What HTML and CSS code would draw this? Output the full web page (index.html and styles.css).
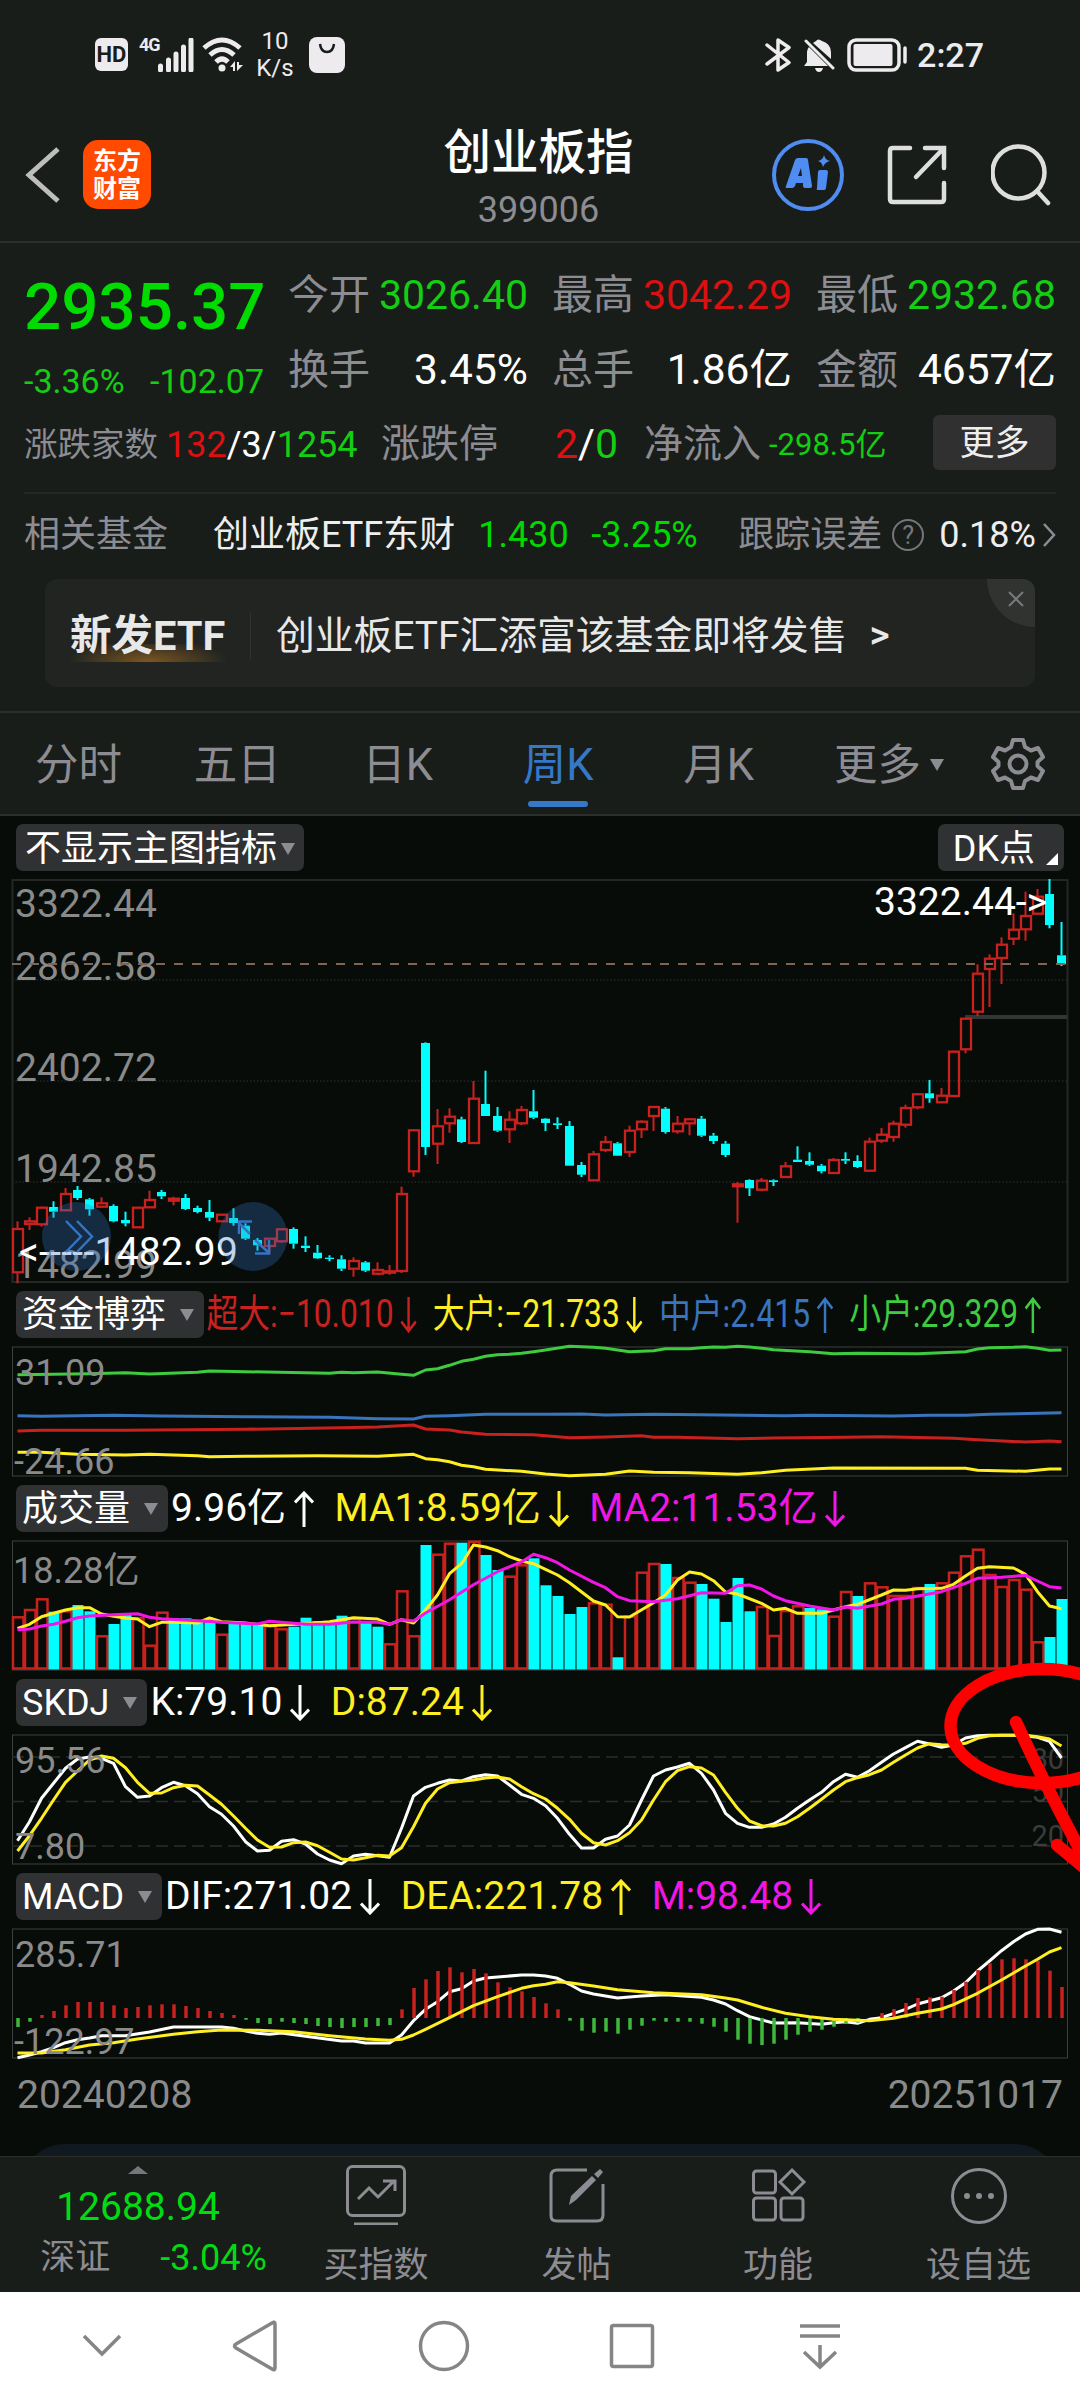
FILE: index.html
```html
<!DOCTYPE html>
<html lang="zh-CN">

<head>
    <meta charset="UTF-8">
    <meta name="viewport" content="width=device-width, initial-scale=1.0">
    <title>创业板指 399006</title>
    <link rel="stylesheet" href="styles.css">
</head>

<body>
    <svg class="defs" width="0" height="0">
        <symbol id="down" viewBox="0 0 20 36"><path d="M10 0V34M1 24.500L10 34L19 24.500" /></symbol>
        <symbol id="up" viewBox="0 0 20 36"><path d="M10 36V2M1 11.500L10 2L19 11.500" /></symbol>
    </svg>

    <div class="top">
        <!-- 状态栏 -->
        <div class="status">
            <span class="hd">HD</span>
            <span class="net">4G</span>
            <svg class="signal" width="36" height="34" viewBox="0 0 36 34">
                <path d="M2.500 28V32M10.500 22V32M18 16V32M25.500 9V32M33 2V32" />
            </svg>
            <svg class="wifi" width="42" height="36" viewBox="0 0 42 36">
                <path d="M2 11Q20 -5 38 11M8 18Q20 7 32 18M14 25Q20 19 26 25" />
                <circle cx="20" cy="31" r="3.500" />
                <path class="fill" d="M28 30L33 24V34H31V30ZM35 25V34L41 28H37V25Z" />
            </svg>
            <span class="speed">10<br>K/s</span>
            <svg class="bag" width="36" height="36" viewBox="0 0 36 36">
                <rect width="36" height="36" rx="8" />
                <path d="M11 7Q12 15 18 15Q24 15 25 7" />
            </svg>
            <svg class="bt" width="26" height="36" viewBox="0 0 26 36">
                <path d="M2 8L24 25.500L13 33V3L24 10.500L2 27" />
            </svg>
            <svg class="bell" width="32" height="36" viewBox="0 0 32 36">
                <path class="fill" d="M1 29L4 25V15Q4 12 6 10L25 29ZM10 6L13 4Q15 1 19 4Q28 7 28 15V22ZM12 31H20Q19 35 16 35Q13 35 12 31Z" />
                <path d="M3 4L30 31" />
            </svg>
            <svg class="battery" width="60" height="34" viewBox="0 0 60 34">
                <rect x="2" y="2" width="50" height="30" rx="7" />
                <rect class="fill" x="6.500" y="6" width="39" height="22" rx="2" />
                <path d="M58 10V24" />
            </svg>
            <span class="clock">2:27</span>
        </div>

        <!-- 标题 -->
        <div class="header">
            <div class="head-left">
                <svg width="36" height="58" viewBox="0 0 36 58"><path class="back" d="M33 3L4 29L33 55" /></svg>
                <span class="logo">东方<br>财富</span>
            </div>
            <div class="title">
                <h1>创业板指</h1>
                <p>399006</p>
            </div>
            <div class="head-right">
                <svg class="ai" width="74" height="74" viewBox="0 0 74 74">
                    <circle cx="37" cy="37" r="34" />
                    <path class="solid" d="M15 48L24 22Q25 20 27 20H35Q37 20 37 22L41 48Q41 50 39 50H34Q32 50 32 48V45H25L24 48Q23 50 21 50H16Q14 50 15 48ZM27 38H31L30 30Z" />
                    <path class="solid" d="M49 32H55Q57 32 57 34L55 50Q55 52 53 52H47Q45 52 46 50L47 34Q47 32 49 32Z" />
                    <path class="solid" d="M53 17Q54 22 59 23Q54 24 52 29Q51 24 47 23Q52 22 53 17Z" />
                </svg>
                <svg class="share" width="60" height="60" viewBox="0 0 60 60">
                    <path d="M23 3H6Q3 3 3 6V54Q3 57 6 57H54Q57 57 57 54V38M38 3H57V23M56 4L29 32" />
                </svg>
                <svg class="share" width="60" height="62" viewBox="0 0 60 62">
                    <circle cx="27.500" cy="28.500" r="26" />
                    <path d="M46 47L57 59" />
                </svg>
            </div>
        </div>

        <!-- 行情 -->
        <div class="quote">
            <div class="price">
                <b>2935.37</b>
                <div class="change"><span>-3.36%</span><span>-102.07</span></div>
            </div>
            <div class="stats">
                <div><label>今开</label><span class="dn">3026.40</span></div>
                <div><label>最高</label><span class="rise">3042.29</span></div>
                <div><label>最低</label><span class="dn">2932.68</span></div>
                <div><label>换手</label><span class="total">3.45%</span></div>
                <div><label>总手</label><span class="total">1.86亿</span></div>
                <div><label>金额</label><span class="total">4657亿</span></div>
            </div>
        </div>
        <div class="breadth">
            <label class="small">涨跌家数</label>
            <span class="count"><i class="rise">132</i>/3/<i class="dn">1254</i></span>
            <label>涨跌停</label>
            <span class="limit"><i class="rise">2</i>/<i class="dn">0</i></span>
            <label>净流入</label>
            <span class="inflow dn">-298.5亿</span>
            <button class="more">更多</button>
        </div>

        <!-- 相关基金 -->
        <div class="fund">
            <label>相关基金</label>
            <span class="fund-name">创业板ETF东财</span>
            <span class="dn fund-price">1.430</span>
            <span class="dn fund-rate">-3.25%</span>
            <label>跟踪误差</label>
            <span class="help">?</span>
            <span>0.18%</span>
            <svg class="go" width="14" height="26" viewBox="0 0 14 26"><path d="M2 2L12 13L2 24" /></svg>
        </div>
        <div class="banner">
            <b>新发ETF</b>
            <span class="banner-text">创业板ETF汇添富该基金即将发售</span>
            <span class="banner-go">&gt;</span>
            <span class="close"><svg width="16" height="16" viewBox="0 0 16 16"><path d="M1 1L15 15M15 1L1 15" /></svg></span>
        </div>

        <div class="tabs">
            <span>分时</span>
            <span>五日</span>
            <span>日K</span>
            <span class="active">周K</span>
            <span>月K</span>
            <span class="tab-more">更多<i class="caret"></i></span>
            <svg width="54" height="54" viewBox="0 0 54 54">
                <path d="M22 3H32L34 10L40 13.500L47 11L52 20L46.500 25V29L52 34L47 43L40 40.500L34 44L32 51H22L20 44L14 40.500L7 43L2 34L7.500 29V25L2 20L7 11L14 13.500L20 10Z" />
                <circle cx="27" cy="27" r="8.500" />
            </svg>
        </div>
    </div>

    <!-- 图表 -->
    <div class="charts">
        <div class="toolbar">
            <span class="chip">不显示主图指标<i class="caret"></i></span>
            <span class="chip dk">DK点<i class="corner"></i></span>
        </div>
        <svg class="pane" id="kline" width="1080" height="404"></svg>

        <div class="legend">
            <span class="chip">资金博弈<i class="caret"></i></span>
            <div class="values narrow">
                <span class="red">超大:−10.010<svg><use href="#down" /></svg></span>
                <span class="yellow">大户:−21.733<svg><use href="#down" /></svg></span>
                <span class="blue">中户:2.415<svg><use href="#up" /></svg></span>
                <span class="green">小户:29.329<svg><use href="#up" /></svg></span>
            </div>
        </div>
        <svg class="pane" id="flow" width="1080" height="131"></svg>

        <div class="legend">
            <span class="chip">成交量<i class="caret"></i></span>
            <div class="values">
                <span>9.96亿<svg><use href="#up" /></svg></span>
                <span class="yellow">MA1:8.59亿<svg><use href="#down" /></svg></span>
                <span class="magenta">MA2:11.53亿<svg><use href="#down" /></svg></span>
            </div>
        </div>
        <svg class="pane" id="volume" width="1080" height="131"></svg>

        <div class="legend">
            <span class="chip">SKDJ<i class="caret"></i></span>
            <div class="values">
                <span>K:79.10<svg><use href="#down" /></svg></span>
                <span class="yellow">D:87.24<svg><use href="#down" /></svg></span>
            </div>
        </div>
        <svg class="pane" id="skdj" width="1080" height="131"></svg>

        <div class="legend">
            <span class="chip">MACD<i class="caret"></i></span>
            <div class="values">
                <span>DIF:271.02<svg><use href="#down" /></svg></span>
                <span class="yellow">DEA:221.78<svg><use href="#up" /></svg></span>
                <span class="magenta">M:98.48<svg><use href="#down" /></svg></span>
            </div>
        </div>
        <svg class="pane" id="macd" width="1080" height="131"></svg>

        <div class="dates"><span>20240208</span><span>20251017</span></div>
        <div class="sheet"><div class="sheet-card"></div></div>

        <!-- 手绘标记 -->
        <svg class="mark" width="140" height="230" viewBox="940 1660 140 230">
            <ellipse cx="1042" cy="1726" rx="91.500" ry="57" />
            <path d="M1016 1722Q1050 1796 1092 1872M1057 1845L1092 1874" />
        </svg>
    </div>

    <!-- 底部工具栏 -->
    <div class="bottom">
        <div class="index">
            <i class="caret-up"></i>
            <b>12688.94</b>
            <div><label>深证</label><span>-3.04%</span></div>
        </div>
        <div class="item">
            <svg width="60" height="62" viewBox="0 0 60 62">
                <rect x="1.500" y="3.500" width="57" height="49" rx="5" />
                <path d="M8 61H52M12 36L23 25L32 34L48 18M37 18H49V28" />
            </svg>
            <span>买指数</span>
        </div>
        <div class="item">
            <svg width="60" height="62" viewBox="0 0 60 62">
                <path d="M40 7H10Q4 7 4 13V53Q4 58 10 58H50Q56 58 56 52V21" />
                <path class="fill" d="M22 42L24 33L45 13L49 17L29 37ZM47 11L53 6L56 9L51 15Z" />
            </svg>
            <span>发帖</span>
        </div>
        <div class="item">
            <svg width="60" height="62" viewBox="0 0 60 62">
                <rect x="5.500" y="8" width="22" height="22" rx="3" />
                <rect x="5.500" y="35" width="22" height="22" rx="3" />
                <rect x="33" y="35" width="22" height="22" rx="3" />
                <path d="M44 7L56 19L44 31L32 19Z" />
            </svg>
            <span>功能</span>
        </div>
        <div class="item">
            <svg width="60" height="62" viewBox="0 0 60 62">
                <circle cx="30" cy="33" r="26.500" />
                <path class="fill" d="M15 33a3 3 0 1 0 6 0a3 3 0 1 0 -6 0M27 33a3 3 0 1 0 6 0a3 3 0 1 0 -6 0M39 33a3 3 0 1 0 6 0a3 3 0 1 0 -6 0" />
            </svg>
            <span>设自选</span>
        </div>
    </div>

    <!-- 系统导航 -->
    <div class="nav">
        <svg class="hide" width="60" height="60" viewBox="0 0 60 60"><path d="M12 20L30 38L48 20" /></svg>
        <svg width="60" height="60" viewBox="0 0 60 60"><path d="M49 8V52Q49 55 46 53L10 32Q7 30 10 28L46 7Q49 5 49 8Z" /></svg>
        <svg width="60" height="60" viewBox="0 0 60 60"><circle cx="30" cy="30" r="23.500" /></svg>
        <svg width="60" height="60" viewBox="0 0 60 60"><rect x="9.500" y="9.500" width="41" height="41" rx="2" /></svg>
        <svg width="60" height="60" viewBox="0 0 60 60"><path d="M10 10H50M10 20H50M30 29V51M14 36L30 51L46 36" /></svg>
    </div>

    <script src="chart.js"></script>
</body>

</html>
```

FILE: styles.css
```css
* {
    margin: 0;
    padding: 0;
    box-sizing: border-box;
}

body {
    width: 1080px;
    height: 2400px;
    overflow: hidden;
    background-color: #191d1a;
    color: #fff;
    font-family: Roboto, "Noto Sans CJK SC", sans-serif;
    font-size: 36px;
    line-height: 1;
}

i {
    font-style: normal;
}

svg {
    display: block;
    flex: none;
    fill: none;
    stroke: #e6e6e6;
    stroke-width: 5;
}

.defs {
    position: absolute;
}

label {
    color: #8c8c92;
    white-space: nowrap;
}

.dn {
    color: #14ce14;
}

.rise {
    color: #dc1010;
}

.top {
    height: 816px;
    border-bottom: 2px solid #2b2f2c;
}

/* 状态栏 */
.status {
    display: flex;
    align-items: center;
    height: 108px;
    padding: 1px 96px 0 95px;
    color: #eeebee;
}

.status svg {
    stroke: #eeebee;
}

.hd {
    width: 33px;
    height: 33px;
    border-radius: 6px;
    background-color: #eeebee;
    color: #191d1a;
    font-size: 22px;
    font-weight: 700;
    line-height: 34px;
    text-align: center;
}

.net {
    width: 19px;
    margin: 0 0 20px 11px;
    font-size: 18px;
    font-weight: 700;
    letter-spacing: -1px;
}

.signal {
    stroke-linecap: round;
}

.wifi {
    margin-left: 8px;
}

.wifi circle,
.status .fill {
    fill: #eeebee;
    stroke: none;
}

.speed {
    width: 50px;
    margin-left: 6px;
    font-size: 24px;
    line-height: 27px;
    text-align: center;
}

.bag {
    margin-left: 9px;
}

.bag rect {
    fill: #eeebee;
    stroke: none;
}

.status .bag path {
    stroke: #191d1a;
    stroke-width: 2.5;
}

.bt {
    margin-left: auto;
    stroke-width: 3.5;
    stroke-linecap: round;
    stroke-linejoin: round;
}

.bell {
    margin-left: 12px;
    stroke-width: 3;
    stroke-linecap: round;
}

.battery {
    margin-left: 12px;
    stroke-width: 3.5;
    stroke-linecap: round;
}

.clock {
    margin-left: 10px;
    font-size: 34px;
    font-weight: 500;
}

/* 标题栏 */
.header {
    display: grid;
    grid-template-columns: 300px 1fr 311px;
    height: 135px;
    border-bottom: 2px solid #2b2f2c;
}

.head-left {
    display: flex;
    align-items: center;
    padding-left: 25px;
}

.back {
    stroke: #bdbdbd;
}

.logo {
    width: 68px;
    height: 69px;
    margin-left: 22px;
    padding-top: 7px;
    border-radius: 15px;
    background-color: #ff4a00;
    font-size: 24px;
    font-weight: 700;
    line-height: 28px;
    text-align: center;
}

.title {
    padding: 22px 0 0 8px;
    text-align: center;
}

.title h1 {
    font-size: 47.5px;
    font-weight: 500;
    line-height: 47px;
}

.title p {
    margin-top: 15px;
    color: #8c8c92;
    font-size: 36px;
}

.head-right {
    display: flex;
    align-items: center;
    gap: 41px;
    padding-left: 2px;
}

.head-right svg + svg + svg {
    margin-left: 3px;
}

.ai {
    stroke: #4f8df2;
    stroke-width: 4;
    margin-right: 1px;
}

.ai .solid {
    fill: #4f8df2;
    fill-rule: evenodd;
    stroke: none;
}

.share {
    stroke: #dedede;
    stroke-width: 4.5;
    stroke-linecap: round;
}

/* 行情 */
.quote {
    display: grid;
    grid-template-columns: 264px 768px;
    height: 164px;
    padding-left: 24px;
}

.price b {
    display: block;
    margin-top: 29px;
    color: #00dc00;
    font-size: 65.5px;
    font-weight: 500;
    line-height: 70px;
}

.change {
    display: flex;
    justify-content: space-between;
    width: 240px;
    margin-top: 22px;
    color: #14ce14;
    font-size: 34px;
}

.stats {
    display: grid;
    grid-template-columns: repeat(3, 240px);
    grid-auto-rows: 75px;
    column-gap: 24px;
    padding-top: 15px;
    font-size: 41px;
}

.stats div {
    display: flex;
    align-items: center;
    justify-content: space-between;
}

.stats .total {
    font-size: 42.5px;
}

.breadth {
    display: flex;
    align-items: center;
    height: 87px;
    margin: 0 24px;
    padding-bottom: 10px;
    border-bottom: 2px solid #242725;
    font-size: 39px;
    white-space: nowrap;
}

.breadth .small {
    width: 142px;
    font-size: 33.5px;
}

.breadth .count {
    width: 215px;
    font-size: 36px;
}

.breadth .limit {
    width: 89px;
    margin-left: 57px;
    font-size: 41px;
}

.breadth .inflow {
    margin-left: 8px;
    font-size: 31px;
}

.more {
    width: 123px;
    height: 55px;
    margin: 0 0 5px auto;
    border: 0;
    border-radius: 6px;
    background-color: #303030;
    color: #eee;
    font: 35px/57px Roboto, "Noto Sans CJK SC", sans-serif;
}

.fund {
    display: flex;
    align-items: center;
    height: 79px;
    padding: 2px 24px 0;
    color: #eee;
    white-space: nowrap;
}

.fund-name {
    margin-left: 45px;
}

.fund-price {
    width: 113px;
    margin-left: 23px;
}

.fund-rate {
    width: 147px;
}

.fund .dn {
    color: #00d900;
}

.help {
    width: 32px;
    height: 32px;
    margin: 0 15px 0 10px;
    border: 2px solid #77777b;
    border-radius: 50%;
    color: #77777b;
    font-size: 25px;
    line-height: 29px;
    text-align: center;
}

.go {
    margin-left: auto;
    stroke: #8c8c92;
    stroke-width: 2.5;
}

.banner {
    position: relative;
    display: flex;
    align-items: center;
    height: 108px;
    margin: 6px 45px 24px;
    padding: 5px 0 0 25px;
    overflow: hidden;
    border-radius: 12px;
    background-color: #212421;
    color: #e8e8e8;
    font-size: 38.8px;
    white-space: nowrap;
}

.banner b {
    width: 156px;
    padding: 6px 0;
    background: radial-gradient(ellipse 52% 130% at 50% 100%, #7d5622, transparent) no-repeat 0 100% / 100% 18px;
    font-size: 41.5px;
}

.banner-text {
    margin-left: 24px;
    padding-left: 25px;
    border-left: 1px solid #303330;
    line-height: 48px;
}

.banner-go {
    margin-left: 22px;
    font-weight: 500;
}

.close {
    position: absolute;
    top: 0;
    right: 0;
    width: 48px;
    height: 48px;
    padding: 12px 0 0 21px;
    border-bottom-left-radius: 48px;
    background-color: #313331;
}

.close svg {
    stroke: #77797a;
    stroke-width: 2;
}

/* 周期 */
.tabs {
    display: grid;
    grid-template-columns: 157px repeat(4, 160.5px) 180px 1fr;
    align-items: center;
    height: 105px;
    border-top: 2px solid #2b2f2c;
    color: #8c8c92;
    font-size: 43.5px;
    text-align: center;
}

.tabs span {
    height: 103px;
    line-height: 106px;
}

.tabs .active {
    color: #3578c8;
}

.tabs .active::after {
    content: "";
    display: block;
    width: 60px;
    height: 6px;
    margin: -18px auto 0;
    border-radius: 3px;
    background-color: #3578c8;
}

.tabs svg {
    margin: 0 0 2px 12px;
    stroke: #8c8c92;
    stroke-width: 4;
    stroke-linejoin: round;
}

.caret {
    display: inline-block;
    border: 7px solid transparent;
    border-top: 12px solid #8c8c92;
    border-bottom: 0;
}

.tab-more .caret {
    margin: 0 0 9px 9px;
}

/* 图表 */
.charts {
    position: relative;
    height: 1340px;
    background-color: #070c09;
}

.toolbar,
.legend {
    display: flex;
    align-items: center;
    height: 63px;
    padding-left: 16px;
}

.toolbar {
    justify-content: space-between;
    padding: 0 16px;
}

.chip {
    display: flex;
    align-items: center;
    height: 47px;
    padding: 1px 10px 0 6px;
    border-radius: 7px;
    background-color: #303132;
    font-size: 36px;
    white-space: nowrap;
}

.chip .caret {
    margin-left: 14px;
}

.toolbar .chip {
    padding: 2px 9px 0 9px;
}

.toolbar .caret {
    margin-left: 4px;
}

.toolbar .dk {
    padding: 2px 6px 0 15px;
}

.corner {
    align-self: flex-end;
    margin: 0 0 6px 11px;
    border: 6px solid #fff;
    border-top-color: transparent;
    border-left-color: transparent;
}

.values {
    display: flex;
    gap: 20.5px;
    padding-left: 3px;
    font-size: 39px;
    white-space: nowrap;
}

.values span {
    display: flex;
    align-items: center;
}

.values svg {
    width: 20px;
    height: 36px;
    margin-left: 8px;
    stroke: currentColor;
    stroke-width: 3;
}

.narrow {
    gap: 20px;
    transform: scaleX(.815);
    transform-origin: 0 50%;
}

.red {
    color: #c9211e;
}

.yellow {
    color: #ffee22;
}

.blue {
    color: #3a74bd;
}

.green {
    color: #3fcb3f;
}

.magenta {
    color: #f216e6;
}

.pane {
    overflow: visible;
    stroke: none;
}

.pane text {
    fill: #8a8a8a;
    font-size: 36px;
}

.pane .big {
    font-size: 39px;
}

.pane .hot {
    fill: #fff;
    font-size: 39px;
}

.pane .dim {
    fill: #3a3c3b;
    font-size: 29px;
    text-anchor: end;
}

.dates {
    display: flex;
    justify-content: space-between;
    height: 85px;
    padding: 17px 17px;
    color: #8a8a8a;
    font-size: 39px;
}

.sheet {
    height: 12px;
    overflow: hidden;
}

.sheet-card {
    height: 100px;
    margin: 0 20px;
    border-radius: 45px;
    background-color: #101820;
}

.mark {
    position: absolute;
    top: 844px;
    left: 940px;
    stroke: #ff0000;
    stroke-width: 12.5;
    stroke-linecap: round;
}

/* 底部 */
.bottom {
    display: grid;
    grid-template-columns: 285px 182px 219px 184px 217px;
    height: 136px;
    border-top: 1px solid #2b2f2c;
    background-color: #191d1a;
    color: #8c8c92;
    font-size: 35px;
}

.index {
    display: flex;
    flex-direction: column;
    align-items: center;
    padding: 9px 9px 0 0;
    color: #00dc14;
}

.caret-up {
    border: 10px solid transparent;
    border-top: 0;
    border-bottom: 8px solid #77777b;
}

.index b {
    margin-top: 14px;
    font-size: 39px;
    font-weight: 400;
}

.index div {
    display: flex;
    gap: 50px;
    margin: 13px 0 0 31px;
}

.index div span {
    font-size: 36px;
}

.item {
    display: flex;
    flex-direction: column;
    align-items: center;
    padding-top: 6px;
}

.item svg {
    stroke: #8c8c92;
    stroke-width: 3;
}

.item .fill {
    fill: #8c8c92;
    stroke: none;
}

.item span {
    margin-top: 23px;
}

.nav {
    display: flex;
    gap: 128px;
    height: 108px;
    padding: 24px 0 0 72px;
    background-color: #fff;
}

.nav svg {
    stroke: #858585;
    stroke-width: 3.5;
}

.nav .hide {
    margin-right: -34px;
}
```

FILE: chart.js
```js
(function (document) {
    var RED = '#c9211e',
        CYAN = '#00ffff',
        GREEN = '#3fb93c',
        YELLOW = '#ffee22',
        STEP = 12,
        LEFT = 17.5;

    // 最高, 实体上, 实体下, 最低, 1=涨
    var candles = [
        [1054,1077,1207,1240,1],[1042,1054,1062,1080,1],[1010,1013,1063,1070,1],[994,1011,1025,1043,0],
        [954,972,1021,1021,1],[948,960,984,990,0],[984,988,1018,1037,0],[982,1000,1010,1010,1],
        [1003,1008,1054,1057,0],[1025,1050,1060,1069,0],[1013,1013,1072,1072,1],[962,990,1012,1012,1],
        [960,966,979,987,0],[980,986,992,1006,1],[972,984,1017,1020,0],[1007,1014,1026,1030,0],
        [990,1026,1043,1053,0],[1034,1034,1054,1054,1],[1015,1044,1059,1067,0],[1060,1067,1106,1110,0],
        [1104,1110,1126,1142,0],[1104,1106,1128,1150,1],[1078,1078,1114,1118,1],[1072,1077,1121,1136,0],
        [1099,1127,1134,1146,0],[1125,1148,1165,1167,0],[1156,1163,1167,1174,0],[1156,1168,1196,1203,0],
        [1162,1173,1196,1220,1],[1173,1177,1202,1206,0],[1177,1200,1211,1214,1],[1185,1204,1208,1214,1],
        [950,972,1203,1209,1],[779,781,904,920,1],[517,519,831,855,0],[717,769,821,882,1],
        [715,740,760,788,1],[740,748,816,819,0],[633,686,819,819,1],[602,702,738,738,0],
        [711,738,782,786,0],[724,749,778,819,1],[708,720,760,765,1],[660,724,743,747,0],
        [744,746,759,783,0],[742,760,765,777,0],[753,768,887,887,0],[876,885,914,921,0],
        [843,853,931,931,1],[798,816,840,846,1],[816,820,857,858,0],[767,782,846,861,1],
        [751,755,778,804,1],[711,711,738,783,1],[711,716,786,791,0],[738,761,784,791,1],
        [745,748,760,796,1],[738,746,797,801,0],[789,797,813,822,0],[813,821,855,861,0],
        [936,943,949,1058,1],[928,930,955,978,0],[924,932,959,964,1],[928,931,936,948,0],
        [876,889,921,921,1],[829,869,876,876,0],[847,873,884,888,0],[882,887,904,910,0],
        [864,870,909,909,1],[847,867,872,882,0],[856,873,891,894,0],[803,815,902,902,1],
        [774,794,812,819,1],[752,761,801,815,1],[704,714,764,773,1],[670,673,712,718,1],
        [630,670,685,698,0],[654,677,697,697,1],[542,545,678,678,1],[446,446,538,550,1],
        [283,311,425,438,1],[253,266,297,411,1],[202,224,264,342,1],[130,179,206,225,1],
        [65,138,178,212,1],[57,80,131,131,1],[27,72,165,175,0],[156,256,283,288,0]
    ];

    // 负数为阴量
    var volumes = [994,972,940,-980,976,-960,-979,1051,-1017,-990,997,1079,980,-1000,-1000,-1010,-1012,1046,
        -1016,-1016,-1020,1020,1030,-1025,-998,-1008,-1008,-992,998,-1010,-1025,1075,916,1051,-780,806,773,
        -773,767,-810,-855,872,838,-820,-901,-933,-987,-966,952,956,-1117,992,860,834,-837,876,890,-897,-941,
        -1011,-879,-979,963,1050,975,961,-969,-973,992,918,-933,892,904,930,930,906,-897,892,860,811,791,867,
        903,882,911,1069,-1056,-942];

    var macd = [1056,1040,1020,1008,991,981,981,981,991,999,996,991,988,988,993,999,1008,1014,1020,1034,1044,
        1047,1040,1044,1047,1053,1056,1059,1056,1056,1053,1050,1003,939,913,888,877,892,882,895,922,937,949,
        966,985,1003,1037,1067,1073,1070,1076,1064,1052,1037,1040,1040,1040,1046,1055,1070,1094,1106,1110,
        1106,1094,1079,1070,1064,1055,1046,1043,1029,1014,1002,984,969,967,965,945,920,885,865,853,850,853,
        857,887,936];

    var series = {
        small: '0:269 6:266 9:263 11:267 15:262 16:258 19:260 26:265 27:262 28:263 30:261 32:268 33:271 34:255 35:251 36:241 37:229 38:223 39:214 40:209 41:208 42:205 43:200 44:195 46:184 48:187 49:190 50:195 51:200 52:199 53:197 54:191 56:191 57:188 58:186 59:187 60:184 61:186 62:190 63:194 66:200 68:206 70:205 75:206 79:200 80:192 81:188 83:187 84:185 85:190 86:196 87:195',
        middle: '0:392 2:394 8:391 12:393 19:395 26:397 30:401 33:402 34:394 36:392 39:388 44:388 47:387 49:390 53:388 57:389 64:392 66:391 73:393 76:391 79:391 81:388 87:383',
        huge: '0:438 2:436 9:436 19:433 27:428 30:426 33:420 34:432 36:435 37:441 39:448 43:449 46:458 49:456 52:452 53:457 55:457 60:461 63:459 69:457 72:455 78:460 80:464 84:471 86:468 87:470',
        large: '0:502 2:502 5:508 9:510 11:508 15:512 16:515 19:514 25:512 30:514 33:508 34:521 35:524 36:530 37:541 38:545 39:553 42:559 44:567 46:572 49:568 51:558 53:562 56:563 60:568 62:563 64:556 68:549 79:550 80:556 84:559 86:552 87:552',
        ma1: '0:1030 1:1018 2:995 3:985 4:975 5:968 6:968 7:987 8:994 9:999 10:1002 11:1025 12:1012 13:1012 15:1014 16:999 17:1010 19:1014 21:1022 24:1016 26:1010 28:998 30:1002 31:1018 32:1004 33:1014 34:975 35:930 36:866 37:836 38:780 39:786 40:797 41:815 42:828 43:836 44:853 45:870 46:893 48:948 49:960 50:995 51:996 53:953 54:930 55:885 56:861 57:867 58:887 59:921 60:927 62:955 63:975 64:970 65:985 67:985 69:965 70:958 72:930 73:915 74:916 75:911 77:910 78:898 79:873 80:850 81:845 83:849 84:868 85:920 86:963 87:971',
        ma2: '0:1034 1:1032 2:1023 3:1018 4:1009 5:998 6:993 8:989 10:986 11:997 12:1001 15:1007 17:1012 20:1017 21:1009 24:1018 26:1018 28:1011 30:1012 31:1018 32:1004 33:1008 34:984 36:944 38:899 40:860 42:831 43:808 44:818 45:833 46:855 48:892 49:908 50:935 51:947 53:950 55:941 57:923 59:925 60:902 61:900 62:912 63:933 64:947 66:963 68:975 69:966 70:970 72:957 73:943 74:940 77:920 79:895 80:880 82:877 84:871 85:888 86:905 87:909',
        k: '0:497 1:440 2:370 3:325 4:280 5:252 6:246 7:250 8:265 9:335 10:367 11:363 12:338 13:322 14:332 15:356 16:395 17:418 18:453 19:500 20:528 21:526 22:499 23:494 24:507 25:537 26:555 27:566 28:543 29:538 31:547 32:460 33:363 34:337 35:325 36:315 37:318 38:305 39:299 40:303 41:330 42:358 43:370 44:392 45:430 46:478 47:519 48:519 49:493 50:483 51:450 52:375 53:303 54:285 55:276 56:265 57:295 58:345 59:415 60:445 61:457 62:457 63:447 64:427 65:400 66:375 67:352 68:320 69:298 70:307 71:287 72:262 73:237 74:218 75:199 76:207 77:217 78:210 79:189 80:182 81:181 83:181 84:183 85:187 86:199 87:249',
        d: '0:528 1:482 2:430 3:375 4:322 5:288 6:255 7:243 8:250 9:278 10:322 11:355 12:354 13:338 14:331 15:333 16:360 17:388 18:423 19:460 20:495 21:517 22:516 23:503 24:501 25:512 26:532 27:552 28:555 29:548 30:541 31:543 32:518 33:455 34:385 35:342 36:323 37:319 38:315 39:309 40:306 41:312 42:335 43:356 44:372 45:400 46:433 47:475 48:503 49:510 50:497 51:473 52:435 53:375 54:320 55:287 56:275 57:279 58:300 59:352 60:400 61:438 62:452 63:453 64:445 65:425 66:400 67:373 68:345 69:320 70:308 71:299 72:285 73:262 74:240 75:219 76:206 77:209 78:210 79:205 80:190 81:182 82:181 84:181 85:185 86:192 87:213',
        dif: '0:1148 1:1140 2:1130 3:1118 4:1103 5:1094 6:1089 7:1082 9:1082 11:1071 13:1056 17:1056 18:1060 19:1068 20:1075 21:1078 22:1074 24:1084 27:1098 28:1098 29:1104 31:1104 32:1080 33:1037 34:1003 35:980 36:950 37:941 38:918 39:909 42:900 43:900 44:903 45:910 46:928 47:948 48:957 50:969 52:963 54:959 57:967 58:975 59:987 60:1007 61:1025 63:1044 65:1043 67:1048 68:1043 69:1040 70:1045 71:1033 72:1028 74:1003 75:987 77:968 78:948 79:923 80:888 81:858 82:827 83:800 84:777 85:763 86:762 87:772',
        dea: '0:1134 2:1134 4:1124 6:1110 8:1103 10:1092 13:1078 15:1070 17:1065 20:1066 23:1070 26:1082 29:1092 31:1096 32:1093 33:1080 34:1063 36:1028 38:992 40:965 42:940 43:932 44:928 45:920 46:923 48:933 50:944 53:953 57:959 59:969 60:975 62:997 64:1015 66:1025 68:1033 71:1037 73:1030 75:1015 77:1002 78:989 80:955 82:915 84:873 85:853 86:831 87:818'
    };

    function x(i) {
        return LEFT + i * STEP;
    }

    // 每个面板: 三分之一像素为单位, base 为面板顶部
    function pane(id, base) {
        var el = document.getElementById(id),
            out = [],
            y = function (v) {
                return +((v - base) / 3).toFixed(1);
            };
        return {
            y: y,
            rect: function (rx, ry, w, h, attrs) {
                out.push('<rect x="' + rx + '" y="' + ry + '" width="' + w + '" height="' + Math.max(h, 0) + '" ' + attrs + '/>');
            },
            line: function (x1, y1, x2, y2, color, w, dash) {
                out.push('<path d="M' + x1 + ' ' + y1 + 'L' + x2 + ' ' + y2 + '" stroke="' + color + '" stroke-width="' + w + '"' +
                    (dash ? ' stroke-dasharray="' + dash + '"' : '') + '/>');
            },
            poly: function (str, color) {
                var pts = str.split(' ').map(function (p) {
                    var a = p.split(':');
                    return x(+a[0]) + ',' + y(+a[1]);
                });
                out.push('<polyline points="' + pts.join(' ') + '" fill="none" stroke="' + color + '" stroke-width="3" stroke-linejoin="round"/>');
            },
            text: function (tx, ty, str, cls, len) {
                out.push('<text x="' + tx + '" y="' + ty + '" class="' + (cls || '') + '"' +
                    (len ? ' textLength="' + len + '"' : '') + '>' + str + '</text>');
            },
            raw: function (s) {
                out.push(s);
            },
            frame: function (h, color, w) {
                this.rect(12.5, 1, 1055, h, 'fill="none" stroke="' + color + '" stroke-width="' + w + '"');
            },
            draw: function () {
                el.innerHTML = out.join('');
            }
        };
    }

    // K线
    var p = pane('kline', 27);
    p.frame(402, '#242726', 2);
    [101, 202, 303].forEach(function (gy) {
        p.line(12, gy, 1067, gy, '#222625', 1.5, '1.5 2');
    });
    p.text(15, 38, '3322.44', 'big');
    p.text(15, 101, '2862.58', 'big');
    p.text(15, 202, '2402.72', 'big');
    p.text(15, 303, '1942.85', 'big');
    p.text(15, 399, '1482.99', 'big');
    p.line(965, 138, 1067, 138, '#353535', 4);
    candles.forEach(function (c, i) {
        var t = p.y(c[1]), b = p.y(c[2]), color = c[4] ? RED : CYAN;
        p.line(x(i), p.y(c[0]), x(i), t, color, 2);
        p.line(x(i), b, x(i), p.y(c[3]), color, 2);
        if (c[4]) {
            p.rect(x(i) - 4.5, t, 10, b - t, 'fill="none" stroke="' + color + '" stroke-width="2.3"');
        } else {
            p.rect(x(i) - 4.5, t, 9, b - t, 'fill="' + color + '"');
        }
    });
    p.line(12, 85, 1067, 85, '#7d6453', 2, '9 9');
    p.text(874, 36, '3322.44-&gt;', 'hot');
    p.text(19, 386, '&lt;-----1482.99', 'hot', 219);
    p.raw('<g fill="#3474c8" fill-opacity=".3"><circle cx="76.500" cy="357.500" r="34.500"/><circle cx="253" cy="357.500" r="34.500"/></g>');
    p.raw('<path d="M66 342L81 357.500L66 373M77 342L92 357.500L77 373M250 355L239 344M239 355V342.500H252M255 361L268 373M269 361V374.500H255" fill="none" stroke="#3474c4" stroke-width="2.500"/>');
    p.draw();

    // 资金博弈
    p = pane('flow', 183);
    p.frame(129, '#3d403f', 1);
    p.poly(series.small, '#3fcb3f');
    p.poly(series.middle, '#3a74bd');
    p.poly(series.huge, RED);
    p.poly(series.large, YELLOW);
    p.text(15, 39, '31.09');
    p.text(14, 128, '-24.66');
    p.draw();

    // 成交量
    p = pane('volume', 765);
    p.frame(129, '#3d403f', 1);
    volumes.forEach(function (v, i) {
        var t = p.y(Math.abs(v));
        if (v > 0) {
            p.rect(x(i) - 4.5, t + 1, 10.5, 127.5 - t, 'fill="none" stroke="' + RED + '" stroke-width="2.5"');
        } else {
            p.rect(x(i) - 5, t, 11, 129.5 - t, 'fill="' + CYAN + '"');
        }
    });
    p.poly(series.ma1, YELLOW);
    p.poly(series.ma2, '#f216e6');
    p.text(13, 43, '18.28亿');
    p.draw();

    // SKDJ
    p = pane('skdj', 177);
    p.frame(129, '#3d403f', 1);
    [23, 67.5, 112].forEach(function (gy) {
        p.line(12, gy, 1067, gy, '#2a2e2c', 1.5, '12 6');
    });
    p.text(1064, 35, '80', 'dim');
    p.text(1064, 68, '50', 'dim');
    p.text(1064, 112, '20', 'dim');
    p.poly(series.k, '#ffffff');
    p.poly(series.d, YELLOW);
    p.text(15, 39, '95.56');
    p.text(15, 125, '7.80');
    p.draw();

    // MACD
    p = pane('macd', 759);
    p.frame(129, '#3d403f', 1);
    p.poly(series.dif, '#ffffff');
    macd.forEach(function (v, i) {
        p.line(x(i) + .5, 90, x(i) + .5, p.y(v), v < 1029 ? RED : GREEN, 3.5);
    });
    p.poly(series.dea, YELLOW);
    p.text(15, 39, '285.71');
    p.text(14, 126, '-122.97');
    p.draw();
})(document);
```
